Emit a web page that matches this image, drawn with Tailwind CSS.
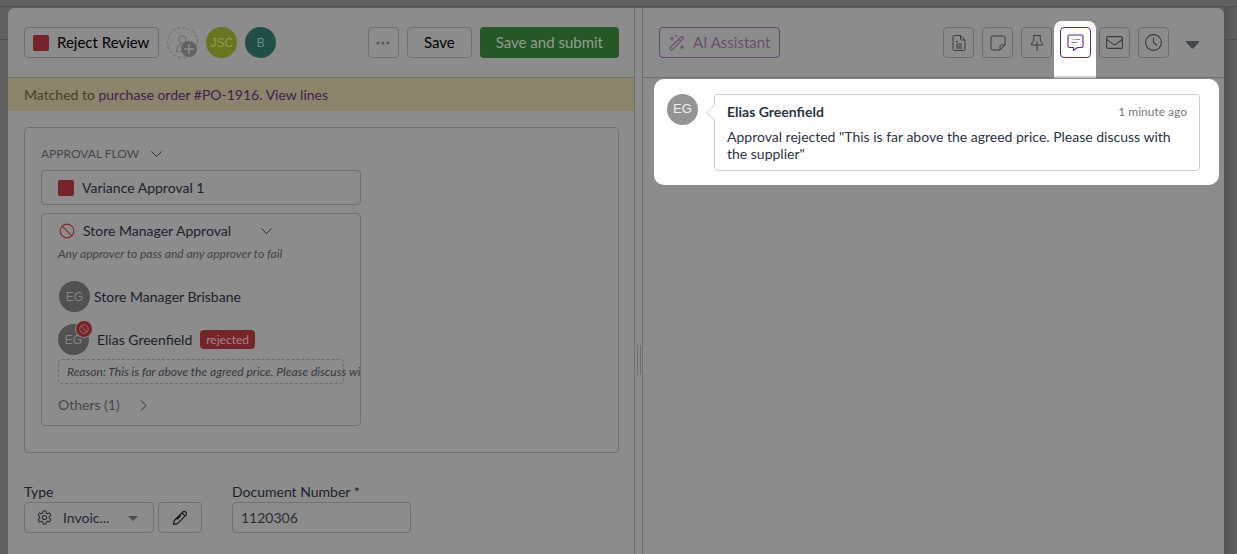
<!DOCTYPE html>
<html lang="en">
<head>
<meta charset="utf-8">
<meta name="viewport" content="width=device-width, initial-scale=1">
<title>Reject Review</title>
<script src="https://cdn.jsdelivr.net/npm/@tailwindcss/browser@4"></script>
</head>
<body class="flex min-h-screen flex-col bg-[#616161] font-['Lato',sans-serif] text-[15px] text-[#1b212c]">
  <div class="h-[7px] shrink-0 border-b border-[#515151]"></div>
  <div class="grid flex-1 grid-cols-[8px_1fr_13px]">
    <div><div class="h-[33px] border-b border-[#525252]"></div></div>

    <div class="mt-px grid grid-cols-[627fr_7px_582fr] overflow-hidden rounded-t-md bg-[#8c8c8c]">
      <!-- Document pane -->
      <main class="flex min-w-0 flex-col border-r border-[#6d6f72]">
        <header class="flex items-center gap-2 border-b border-[#6d6f75] py-[19px] pr-[15px] pl-4">
          <button class="flex h-[31px] items-center gap-2 rounded border border-[#6b7078] pr-[9px] pl-2 text-black"><span class="size-4 rounded-xs bg-[#752429]"></span>Reject Review</button>
          <button aria-label="Add reviewer" class="size-[31px]">
            <svg class="size-[31px]" viewBox="0 0 31 31" fill="none"><circle cx="15.5" cy="15.5" r="15" stroke="#707070" stroke-dasharray="3 2"/><g stroke="#6f6f72" stroke-width="1.100"><circle cx="15.500" cy="12.500" r="3.500"/><path d="M13.500 16v1.500C10.500 19 9.500 20.500 9.500 24.500h6M17.500 16v1.500"/></g><circle cx="22" cy="22" r="8" fill="#626262"/><path d="M22 17v10M17 22h10" stroke="#8c8c8c" stroke-width="1.500"/></svg>
          </button>
          <span class="flex size-[31px] items-center justify-center rounded-full bg-[#6b751f] font-['Liberation_Sans',sans-serif] text-xs text-[#929a54]">JSC</span>
          <span class="flex size-[31px] items-center justify-center rounded-full bg-[#225049] font-['Liberation_Sans',sans-serif] text-xs text-[#5a9088]">B</span>
          <button aria-label="More actions" class="ml-auto flex size-[31px] items-center justify-center rounded border border-[#6d7278]"><svg class="h-1 w-4" viewBox="0 0 16 4" fill="#55585c"><circle cx="3" cy="2" r="1.500"/><circle cx="8" cy="2" r="1.500"/><circle cx="13" cy="2" r="1.500"/></svg></button>
          <button class="h-[31px] rounded border border-[#6d7278] px-4 text-black">Save</button>
          <button class="h-[31px] rounded bg-[#265726] px-4 text-[#929d92]">Save and submit</button>
        </header>

        <p class="bg-[#8b846b] px-4 text-sm leading-[33px] text-[#4c4020]">Matched to <a href="#" class="text-[#432050]">purchase order #PO-1916.</a> <a href="#" class="text-[#432050]">View lines</a></p>

        <section class="mt-4 mr-[15px] ml-4 rounded border border-[#707274] px-4 pt-4 pb-[26px]">
          <button class="flex h-5 items-center gap-3 text-xs text-[#44474d]">APPROVAL FLOW <svg class="h-[6px] w-[11px]" viewBox="0 0 11 6" fill="none" stroke="#30343b"><path d="M.5.500 5.500 5.500l5-5"/></svg></button>
          <div class="mt-[6px] flex h-[35px] w-80 items-center gap-2 rounded border border-[#6e7176] px-4 text-sm"><span class="size-4 rounded-xs bg-[#752429]"></span>Variance Approval 1</div>

          <div class="mt-2 w-80 overflow-hidden rounded border border-[#6e7176] px-4 pt-[7px] pb-[10px]">
            <button class="flex h-5 items-center text-sm"><svg class="mr-2 ml-px size-4" viewBox="0 0 16 16" fill="none" stroke="#84292e" stroke-width="1.200"><circle cx="8" cy="8" r="6.800"/><path d="m3.200 3.200 9.600 9.600"/></svg>Store Manager Approval<svg class="ml-[30px] h-[6px] w-[11px]" viewBox="0 0 11 6" fill="none" stroke="#30343b"><path d="M.5.500 5.500 5.500l5-5"/></svg></button>
            <p class="mt-[3px] text-xs leading-5 text-[#414449] italic">Any approver to pass and any approver to fail</p>
            <div class="mt-[17px] ml-px flex items-center gap-1 text-sm"><span class="flex size-[31px] items-center justify-center rounded-full bg-[#515151] font-['Liberation_Sans',sans-serif] text-xs text-[#848484]">EG</span>Store Manager Brisbane</div>
            <div class="mt-[12px] flex items-center gap-2 text-sm">
              <span class="relative flex size-[31px] items-center justify-center rounded-full bg-[#515151] font-['Liberation_Sans',sans-serif] text-xs text-[#848484]">EG
                <svg class="absolute -top-1 -right-1 size-[18px]" viewBox="0 0 18 18" fill="none"><circle cx="9" cy="9" r="8.500" fill="#752429" stroke="#8c8c8c"/><circle cx="9" cy="9" r="4.200" stroke="#a06468"/><path d="m6 6 6 6" stroke="#a06468"/></svg>
              </span>
              Elias Greenfield
              <span class="rounded bg-[#752429] px-[6px] text-xs leading-[19px] text-[#a18b8c]">rejected</span>
            </div>
            <p class="mt-1 h-[25px] rounded border border-dashed border-[#6c6e70] px-2 text-xs leading-[23px] whitespace-nowrap text-[#36393e] italic">Reason: This is far above the agreed price. Please discuss with</p>
            <button class="mt-[11px] flex h-5 items-center gap-5 text-sm text-[#45484d]">Others (1) <svg class="h-[11px] w-[7px]" viewBox="0 0 7 11" fill="none" stroke="#30343b"><path d="m1 .5 5 5-5 5"/></svg></button>
          </div>
        </section>

        <form class="mt-[29px] flex gap-[30px] px-4 pb-5 text-sm">
          <div>
            <label for="type" class="block leading-5">Type</label>
            <div class="flex gap-1">
              <div class="relative">
                <select id="type" class="h-[31px] w-[130px] appearance-none rounded border border-[#6e7176] pl-[38px] text-[#222831]"><option>Invoic...</option><option>Credit note</option></select>
                <svg class="pointer-events-none absolute top-2 left-[13px] size-[15px]" viewBox="0 0 16 16" fill="none" stroke="#272c34" stroke-width="1.100" stroke-linejoin="round"><path d="M6.600 1h2.800l.5 2.200 1.300.750 2.100-.650 1.400 2.400-1.600 1.550v1.500l1.600 1.550-1.400 2.400-2.100-.650-1.300.750L9.400 15H6.600l-.5-2.200-1.300-.750-2.100.650-1.400-2.400 1.600-1.550v-1.500L1.300 5.700l1.400-2.400 2.100.650 1.300-.750z"/><circle cx="8" cy="8" r="2.200"/></svg>
                <svg class="pointer-events-none absolute top-[14px] right-4 h-[5px] w-[10px]" viewBox="0 0 10 5" fill="#4b4d50"><path d="M0 0h10L5 5z"/></svg>
              </div>
              <button type="button" aria-label="Edit type" class="flex h-[31px] w-11 items-center justify-center rounded border border-[#6e7176]"><svg class="size-4" viewBox="0 0 16 16" fill="none" stroke="#111" stroke-width="1.100" stroke-linejoin="round"><path d="m1.500 14.500.8-4L11 1.800c1.700-1.400 4.500 1.300 3.200 3.100L5.500 13.600zM10 2.900l3.200 3.200M8.800 5.500l-4 4"/></svg></button>
            </div>
          </div>
          <div>
            <label for="number" class="block leading-5">Document Number *</label>
            <input id="number" value="1120306" class="h-[31px] w-[179px] rounded border border-[#6e7176] px-2 text-[#2b2e34]">
          </div>
        </form>
      </main>

      <!-- Resize handle between the two panes -->
      <div class="relative"><span class="absolute top-[337px] left-[2px] h-[30px] w-1 border-x border-[#6e6e6e]"></span></div>

      <!-- Activity pane -->
      <aside class="min-w-0 border-l border-[#6d6f72]">
        <header class="flex items-center gap-2 border-b border-[#6d6f75] py-[19px] pr-[25px] pl-4">
          <button class="mr-auto flex h-[31px] items-center gap-2 rounded border border-[#604867] px-[9px] text-[#684f6e]"><svg class="size-4" viewBox="0 0 16 16" fill="none" stroke="currentColor" stroke-width="1.100"><path d="M1.300 12.500 11.800 2c1.300-1.100 3.300.9 2.200 2.200L3.500 14.700c-1.300 1.100-3.300-.9-2.200-2.200zM9.500 4.300l2.200 2.200M3 1.500v4M1 3.500h4M13 10v4M11 12h4M7 0v2M6 1h2"/></svg>AI Assistant</button>
          <button aria-label="Document" class="flex size-[31px] items-center justify-center rounded border border-[#6d7073] text-[#383c42]"><svg class="h-4 w-[14px]" viewBox="0 0 14 16" fill="none" stroke="currentColor"><path d="M8.500.500H2.500q-1.500 0-1.500 1.500v12q0 1.500 1.500 1.500h9q1.500 0 1.500-1.500V5zM8.500.500V4q0 1 1 1H13M4 6.500h2M4 9h6M4 11h6M4 13h6"/></svg></button>
          <button aria-label="Notes" class="flex size-[31px] items-center justify-center rounded border border-[#6d7073] text-[#383c42]"><svg class="size-4" viewBox="0 0 16 16" fill="none" stroke="currentColor"><path d="M10 15H3Q1 15 1 13V3Q1 1 3 1h10q2 0 2 2v7zM10 15v-3.500q0-1.500 1.500-1.500H15"/></svg></button>
          <button aria-label="Pinned" class="flex size-[31px] items-center justify-center rounded border border-[#6d7073] text-[#383c42]"><svg class="size-4" viewBox="0 0 16 16" fill="none" stroke="currentColor" stroke-linejoin="round"><path d="M4 .5h8M5 .500 4.500 6Q2.500 7.500 2.500 10h11Q13.500 7.500 11.500 6L11 .5M8 6.500V16"/></svg></button>
          <span class="relative">
            <span class="absolute -top-[6px] -right-[5px] -left-[6px] h-[57px] rounded-t-lg border-b-2 border-[#c9cdd2] bg-white"></span>
            <button aria-label="Comments" class="relative flex size-[31px] items-center justify-center rounded border border-[#6b1f82] bg-white text-[#6b1f82]"><svg class="size-[17px]" viewBox="0 0 17 17" fill="none" stroke="currentColor"><path d="M2.500 1h12q1.500 0 1.500 1.500v9.500q0 1.500-1.500 1.500H10.500l-4 2.800V13.500h-4Q1 13.500 1 12v-9.500Q1 1 2.500 1z" stroke-width="1.100"/><path d="M5.500 5.500h1.500M8 5.500h5M4.500 8.500h6" stroke="#a878b6" stroke-width="1.200"/></svg></button>
          </span>
          <button aria-label="Email" class="flex size-[31px] items-center justify-center rounded border border-[#6d7073] text-[#383c42]"><svg class="h-[13px] w-[17px]" viewBox="0 0 17 13" fill="none" stroke="currentColor" stroke-width="1.100"><rect x=".6" y=".6" width="15.800" height="11.800" rx="1.500"/><path d="m.8 3.500 6.200 4.600q1.500 1 3 0l6.200-4.600"/></svg></button>
          <button aria-label="History" class="flex size-[31px] items-center justify-center rounded border border-[#6d7073] text-[#383c42]"><svg class="size-[17px]" viewBox="0 0 17 17" fill="none" stroke="currentColor" stroke-width="1.100"><circle cx="8.500" cy="8.500" r="7.900"/><path d="M8.500 3.500v5l3.500 3"/></svg></button>
          <button aria-label="Expand" class="ml-[9px] pt-1"><svg class="h-2 w-[13px]" viewBox="0 0 13 8" fill="#44484d"><path d="M1 0h11q1 0 1 1.200L7.800 7q-1.300 1-2.600 0L0 1.200Q0 0 1 0z"/></svg></button>
        </header>

        <article class="mt-px mr-[5px] ml-[11px] flex gap-4 rounded-[10px] bg-white pt-[15px] pr-[19px] pb-[14px] pl-[13px] text-sm text-[#2a3446]">
          <span class="flex size-[31px] shrink-0 items-center justify-center rounded-full bg-[#949494] font-['Liberation_Sans',sans-serif] text-[13px] text-[#eeeeee]">EG</span>
          <div class="relative min-w-0 flex-1 rounded border border-[#c8ccd5] px-3 pt-[6px] pb-2">
            <svg class="absolute top-[9px] -left-[9px] h-[17px] w-[9px]" viewBox="0 0 9 17"><path d="M9 .5 1 8.500l8 8" fill="#fff" stroke="#c8ccd5"/></svg>
            <div class="flex items-center justify-between leading-[21px]"><strong>Elias Greenfield</strong><time class="text-xs leading-[21px] text-[#737980]">1 minute ago</time></div>
            <p class="mt-[6px] leading-[17px]">Approval rejected "This is far above the agreed price. Please discuss with the supplier"</p>
          </div>
        </article>
      </aside>
    </div>

    <div class="bg-linear-to-r from-[#545454] to-[#606060]"><div class="h-[33px] border-b border-[#4f4f4f]"></div></div>
  </div>
</body>
</html>
